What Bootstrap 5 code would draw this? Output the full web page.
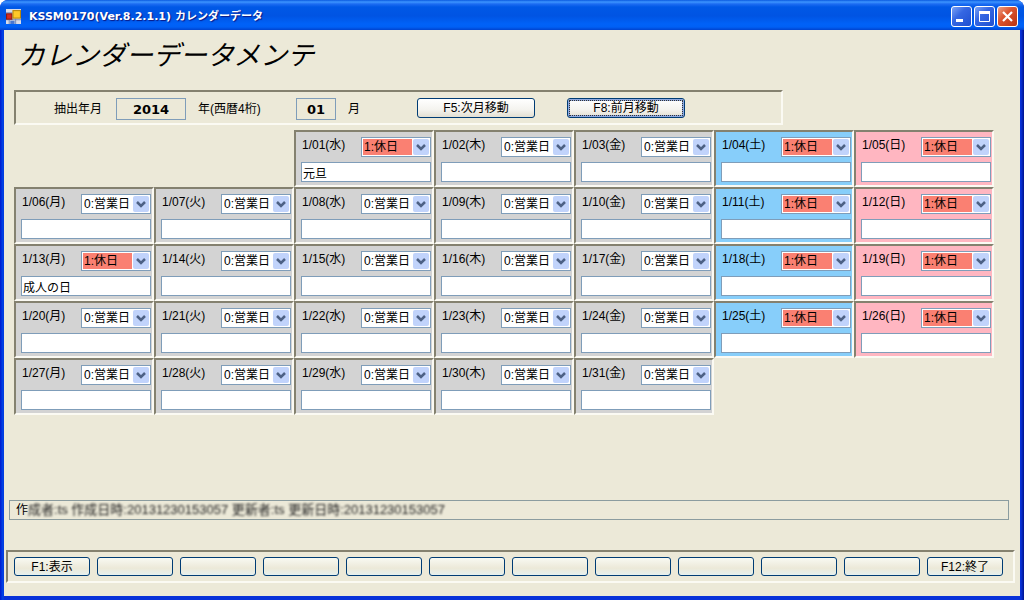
<!DOCTYPE html>
<html lang="ja">
<head>
<meta charset="utf-8">
<meta name="viewport" content="width=device-width, initial-scale=1">
<title>KSSM0170(Ver.8.2.1.1) カレンダーデータ</title>
<link rel="stylesheet" href="https://cdn.jsdelivr.net/npm/bootstrap@5.3.0/dist/css/bootstrap.min.css">
<script src="https://cdn.jsdelivr.net/npm/bootstrap@5.3.0/dist/js/bootstrap.bundle.min.js"></script>
<style>
  body { font: 12px/16px "Liberation Sans", "Noto Sans CJK JP", sans-serif; color: #000; background: #fff; }
  .app-window { background: linear-gradient(90deg, #0019cf, #0048e8 3px, #0831d9 4px, #0831d9 calc(100% - 4px), #0831d9 calc(100% - 3px), #00138c); border-radius: 8px 8px 0 0; overflow: hidden; }
  .title-bar { height: 30px; padding: 3px 6px 0; color: #fff; font: bold 11px/16px "DejaVu Sans", "Noto Sans CJK JP", sans-serif; text-shadow: 1px 1px 1px #0a1883;
    background: linear-gradient(#0a5ae0 0, #3d95ff 2px, #1c6cf2 4px, #0058e6 7px, #0054e3 16px, #0062f8 24px, #0060f5 27px, #0043cf 30px); }
  .caption-btns { gap: 2px; }
  .caption-btn { width: 21px; height: 21px; padding: 0; border: 1px solid #fff; border-radius: 3px; background: linear-gradient(135deg, #7ba2f5, #3567e3 40%, #1f4fd0); }
  .caption-btn svg { display: block; }
  .caption-close { background: linear-gradient(135deg, #eda186, #dc5530 40%, #b93312); }
  .client-area { background: #ece9d8; margin: 0 4px 4px; }
  .screen-title { font: italic 400 27px/32px "Noto Sans CJK JP", sans-serif; padding: 8px 0 20px 14px; margin: 0; }
  .sunken { border: 2px solid; border-color: #84816f #fbfaf3 #fbfaf3 #84816f; }
  .main-part { padding: 0 26px 0 10px; }
  .search-bar { height: 35px; max-width: 769px; padding-left: 38px; margin-bottom: 5px; }
  .search-bar label { padding-top: 2px; }
  .cap-extract { width: 62px; }
  .cap-year { width: 98px; margin-left: 12px; }
  .cap-month { width: 69px; margin-left: 12px; }
  .num-box { height: 22px; padding: 0; border: 1px solid #7f9db9; background: #ece9d8; text-align: center; font: bold 13px/20px "DejaVu Sans", sans-serif; color: #000; margin-top: 3px; }
  .num-year { width: 70px; }
  .num-month { width: 40px; }
  .xp-btn { border: 1px solid #003c74; border-radius: 3px; background: linear-gradient(#fff, #f4f3ee 60%, #e3dfd2); padding: 0; color: #000; font-size: 12px; line-height: 16px; }
  .move-btn { width: 118px; height: 20px; margin-right: 32px; }
  .current-btn { box-shadow: inset 0 0 0 2px #8fa9e0, inset 0 -2px 0 #4a5fc8; outline: 1px dotted #333; outline-offset: -3px; }
  .calendar { display: grid; grid-template-columns: repeat(7, minmax(0, 1fr)); }
  .day-cell { height: 57px; padding: 5px 1px 4px 6px; background: #d3d3d3; }
  .day-sat { background: #87cefa; }
  .day-sun { background: #ffb6c1; }
  .day-kind { width: 70px; height: 20px; padding: 0 0 0 2px; border: 1px solid #7f9db9; appearance: none; color: #000; font-size: 12px; line-height: 18px;
    background: #fff url("data:image/svg+xml,%3Csvg xmlns='http://www.w3.org/2000/svg' width='16' height='16'%3E%3Crect width='16' height='16' rx='2' fill='%23c1d3fb'/%3E%3Cpath d='M4 6l4 4 4-4' fill='none' stroke='%234d6185' stroke-width='2.5'/%3E%3C/svg%3E") no-repeat right 1px center; }
  .day-off { background-image: url("data:image/svg+xml,%3Csvg xmlns='http://www.w3.org/2000/svg' width='16' height='16'%3E%3Crect width='16' height='16' rx='2' fill='%23c1d3fb'/%3E%3Cpath d='M4 6l4 4 4-4' fill='none' stroke='%234d6185' stroke-width='2.5'/%3E%3C/svg%3E"), linear-gradient(#fa8072, #fa8072); background-position: right 1px center, 1px 1px; background-size: 16px 16px, 49px 16px; }
  .day-note { display: block; width: calc(100% + 1px); height: 20px; border: 1px solid #7f9db9; background: #fff; padding: 0 1px; margin: 5px 0 0 -1px; color: #000; font-size: 12px; line-height: 16px; }
  .record-info { border: 1px solid #8b9c9f; margin: 0 11px 30px 5px; padding: 0 6px; height: 20px; line-height: 18px; white-space: nowrap; }
  .record-mask { display: inline-block; filter: blur(1px); color: #222; font-size: 13px; }
  .key-bar { margin: 0 5px 13px 2px; padding: 5px 10px 5px 6px; gap: 7px; }
  .key-btn { flex: 1 1 0; min-width: 0; height: 19px; background: linear-gradient(#f8f9f2, #ece9d8 60%, #e6f0ee); }
</style>
</head>
<body>
<div class="app-window d-flex flex-column min-vh-100">
  <header class="title-bar d-flex align-items-center">
    <svg width="15" height="15" viewBox="0 0 14 14" aria-hidden="true">
      <rect width="14" height="14" fill="#d8dce8"/><path d="M0 3.500h6M0 10h14M3 10v4M9 9v5" stroke="#7c8fb8"/>
      <rect x=".5" y="4.500" width="5" height="5" fill="#d22b1f" stroke="#8d1710"/>
      <rect x="6.500" y="1.500" width="7" height="7" fill="#ffc928" stroke="#b98708"/>
      <rect x="4" y="11" width="4" height="3" fill="#4a78d0"/>
    </svg>
    <span class="ms-1 ps-1">KSSM0170(Ver.8.2.1.1) カレンダーデータ</span>
    <div class="caption-btns d-flex ms-auto">
      <button type="button" class="caption-btn" aria-label="最小化"><svg width="19" height="19"><path d="M4 13.500h7" stroke="#fff" stroke-width="3"/></svg></button>
      <button type="button" class="caption-btn" aria-label="最大化"><svg width="19" height="19"><path d="M4.500 5v9.500h10V5" fill="none" stroke="#fff"/><path d="M4 5.500h11" stroke="#fff" stroke-width="3"/></svg></button>
      <button type="button" class="caption-btn caption-close" aria-label="閉じる"><svg width="19" height="19"><path d="M5 5l9 9M14 5l-9 9" stroke="#fff" stroke-width="2.200"/></svg></button>
    </div>
  </header>

  <main class="client-area flex-grow-1 d-flex flex-column">
    <h1 class="screen-title">カレンダーデータメンテ</h1>
    <div class="main-part">
      <div class="search-bar sunken d-flex align-items-center">
        <label class="cap-extract" for="year">抽出年月</label>
        <input id="year" class="num-box num-year" value="2014">
        <label class="cap-year" for="year">年(西暦4桁)</label>
        <input id="month" class="num-box num-month" value="01">
        <label class="cap-month" for="month">月</label>
        <button type="button" class="xp-btn move-btn">F5:次月移動</button>
        <button type="button" class="xp-btn move-btn current-btn">F8:前月移動</button>
      </div>
      <div class="calendar" id="calendar"></div>
    </div>
    <div class="record-info mt-auto">作<span class="record-mask">成者:ts 作成日時:20131230153057 更新者:ts 更新日時:20131230153057</span></div>
    <div class="key-bar sunken d-flex" id="keys"></div>
  </main>
</div>
<script>
  // Day cells: weeks start on Monday, 1 January 2014 is a Wednesday
  const weekdays = ['月', '火', '水', '木', '金', '土', '日'];
  const holidays = { 1: '元旦', 13: '成人の日' };
  let cells = '';
  for (let d = 1; d <= 31; d++) {
    const w = (d + 1) % 7;
    const off = w > 4 || holidays[d];
    const tone = w === 5 ? ' day-sat' : w === 6 ? ' day-sun' : '';
    cells += `<div class="day-cell sunken${tone}"${d === 1 ? ' style="grid-column-start:3"' : ''}>
      <div class="d-flex justify-content-between">
        <label for="kind${d}">1/${String(d).padStart(2, '0')}(${weekdays[w]})</label>
        <select id="kind${d}" class="day-kind${off ? ' day-off' : ''}">
          <option${off ? '' : ' selected'}>0:営業日</option><option${off ? ' selected' : ''}>1:休日</option>
        </select>
      </div>
      <input class="day-note" aria-label="備考 1/${d}" value="${holidays[d] || ''}">
    </div>`;
  }
  document.getElementById('calendar').innerHTML = cells;

  // Function keys F1 to F12
  const keys = { 1: 'F1:表示', 12: 'F12:終了' };
  let bar = '';
  for (let k = 1; k <= 12; k++) bar += `<button type="button" class="xp-btn key-btn" aria-label="${keys[k] || 'F' + k}">${keys[k] || ''}</button>`;
  document.getElementById('keys').innerHTML = bar;
</script>
</body>
</html>
